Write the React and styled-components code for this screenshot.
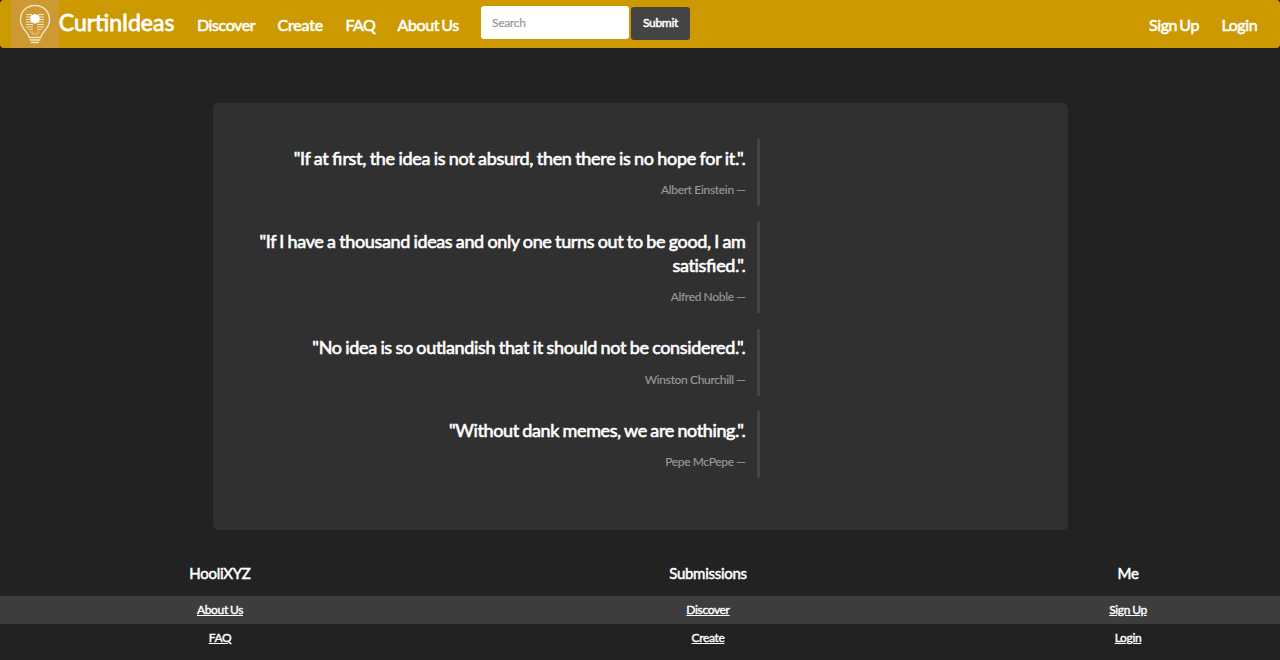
import React from 'react';
import styled, { createGlobalStyle } from 'styled-components';

const GlobalStyle = createGlobalStyle`
  * { box-sizing: border-box; }
  body {
    margin: 0;
    background: #222;
    color: #fff;
    font-family: Lato, "Liberation Sans", sans-serif;
    font-size: 12px;
    line-height: 17px;
    overflow: hidden;
  }
`;

const Navbar = styled.nav`
  display: flex;
  height: 48px;
  padding: 0 11px;
  background: #c90;
  border-radius: 4px;
`;

const Brand = styled.a`
  display: flex;
  width: 175px;
  font-size: 23px;
  line-height: 45px;
  white-space: nowrap;
  -webkit-text-stroke: 0.8px #fff;
`;

const Logo = styled.svg`
  flex: none;
  width: 48px;
  height: 48px;
  margin-right: -0.3px;
`;

const NavLink = styled.a`
  width: ${(p) => p.$width}px;
  padding-left: 11px;
  font-size: 16px;
  line-height: 49px;
  letter-spacing: ${(p) => p.$tracking ?? -0.4}px;
  word-spacing: -1.5px;
  white-space: nowrap;
  -webkit-text-stroke: 0.6px #fff;
`;

const SearchForm = styled.form`
  display: flex;
  gap: 2px;
  padding: 6px 0 0 11px;
  margin-right: auto;
`;

const SearchInput = styled.input`
  width: 148px;
  height: 33px;
  padding: 0 11px 1px;
  border: 0;
  border-radius: 3px;
  background: #fff;
  font: 12px Lato, sans-serif;
  letter-spacing: -0.3px;
  &::placeholder { color: #999; opacity: 1; -webkit-text-stroke: 0.2px #999; }
`;

const SubmitButton = styled.button`
  width: 59px;
  height: 33px;
  margin-top: 1px;
  padding: 0 0 2px;
  border: 0;
  border-radius: 3px;
  background: #444;
  color: #fff;
  font: 12px Lato, sans-serif;
  letter-spacing: -0.3px;
  -webkit-text-stroke: 0.5px #fff;
`;

const Panel = styled.main`
  width: 855px;
  height: 427px;
  margin: 55px 0 0 213px;
  padding: 36px 45px;
  border-radius: 5px;
  background: #303030;
`;

const Quote = styled.blockquote`
  width: 502px;
  margin: 0 0 ${(p) => p.$gap}px;
  padding: ${(p) => p.$top}px 11.5px 8px 0;
  border-right: 3px solid #444;
  text-align: right;
`;

const QuoteText = styled.p`
  margin: 0 0 ${(p) => p.$below}px;
  font-size: 18px;
  line-height: 24px;
  letter-spacing: ${(p) => p.$tracking}px;
  word-spacing: -0.7px;
  -webkit-text-stroke: 0.6px #fff;
`;

const Ligature = styled.span`
  letter-spacing: 0;
`;

const Author = styled.small`
  display: block;
  font-size: 12px;
  line-height: 17px;
  letter-spacing: -0.3px;
  word-spacing: -0.3px;
  color: #999;
  -webkit-text-stroke: 0.15px #999;
`;

const Footer = styled.footer`
  margin-top: 22px;
`;

const FooterRow = styled.div`
  display: grid;
  grid-template-columns: 440px 536px 304px;
  align-items: center;
  height: 28px;
  padding-bottom: 2px;
  text-align: center;
  background: ${(p) => (p.$striped ? '#3d3d3d' : 'transparent')};
`;

const FooterHeadings = styled(FooterRow)`
  height: 44px;
`;

const FooterTitle = styled.h3`
  margin: 0;
  font-size: 15px;
  font-weight: 400;
  line-height: 20px;
  letter-spacing: -0.28px;
  -webkit-text-stroke: 0.5px #fff;
`;

const FooterLink = styled.a`
  text-decoration: underline;
  letter-spacing: -0.35px;
  word-spacing: -0.6px;
  -webkit-text-stroke: 0.4px #fff;
`;

const quotes = [
  { text: '"If at first, the idea is not absurd, then there is no hope for it.".', by: 'Albert Einstein', gap: 16, top: 7, below: 11, tracking: -0.3 },
  { text: '"If I have a thousand ideas and only one turns out to be good, I am satisfied.".', by: 'Alfred Noble', gap: 16, top: 7, below: 11, tracking: -0.36 },
  { text: '"No idea is so outlandish that it should not be considered.".', by: 'Winston Churchill', gap: 15, top: 6, below: 12, tracking: -0.33 },
  { text: '"Without dank memes, we are nothing.".', by: 'Pepe McPepe', gap: 0, top: 7, below: 11, tracking: -0.37 },
];

const navLinks = [['Discover', 80.5], ['Create', 68, -0.2], ['FAQ', 52, -0.6], ['About Us', 83.5]];

// Tracked text drops its ligatures, so each "fi" pair keeps normal spacing.
const keepLigature = (word) =>
  word.split(/(fi)/).map((part, i) => (part === 'fi' ? <Ligature key={i}>fi</Ligature> : part));

const withLigatures = (text) =>
  text.split(/(\S*fi\S*)/).map((part, i) => (part.includes('fi') ? <span key={i}>{keepLigature(part)}</span> : part));

function BulbLogo() {
  return (
    <Logo viewBox="0 0 48 48">
      <rect width="48" height="48" fill="#cc9933" />
      <g fill="none" stroke="#f3e3c0">
        <path strokeWidth="1.4" d="M18 37 C17 31 9.5 29 9.5 20 C9.5 11 16 5.5 24 5.5 C32 5.5 38.5 11 38.5 20 C38.5 29 31 31 30 37" />
        <path strokeWidth="1.2" d="M15 14.5h6M27 14.5h6M15 17h5M28 17h5M15 19.5h5M28 19.5h5M15 22h6M27 22h6M15 24.5h7M26 24.5h7M15 27h7M26 27h7" />
        <path strokeWidth="1" opacity=".7" d="M17 29.5h5M26 29.5h5M19 32h3.5M25.5 32h3.5M21 34h6" />
        <path strokeWidth="1.6" d="M17.5 37.5h13M18.5 40h11M20 42.5h8" />
      </g>
      <path stroke="#cc9933" strokeWidth="1" d="M24 23v9" />
      <path fill="#fff" d="M24 14l3.8 1.3 1.1 3.7-1.1 3-3.8 1.8-3.8-1.8-1.1-3 1.1-3.7z" />
    </Logo>
  );
}

export default function App() {
  return (
    <>
      <GlobalStyle />
      <Navbar>
        <Brand><BulbLogo />CurtinIdeas</Brand>
        {navLinks.map(([label, width, tracking]) => (
          <NavLink key={label} $width={width} $tracking={tracking}>{label}</NavLink>
        ))}
        <SearchForm>
          <SearchInput placeholder="Search" />
          <SubmitButton type="button">Submit</SubmitButton>
        </SearchForm>
        <NavLink $width={72.5}>Sign Up</NavLink>
        <NavLink $width={58.5}>Login</NavLink>
      </Navbar>
      <Panel>
        {quotes.map((q) => (
          <Quote key={q.by} $gap={q.gap} $top={q.top}>
            <QuoteText $tracking={q.tracking} $below={q.below}>{withLigatures(q.text)}</QuoteText>
            <Author>{q.by} —</Author>
          </Quote>
        ))}
      </Panel>
      <Footer>
        <FooterHeadings>
          <FooterTitle>HooliXYZ</FooterTitle>
          <FooterTitle>Submissions</FooterTitle>
          <FooterTitle>Me</FooterTitle>
        </FooterHeadings>
        <FooterRow $striped>
          <span><FooterLink>About Us</FooterLink></span>
          <span><FooterLink>Discover</FooterLink></span>
          <span><FooterLink>Sign Up</FooterLink></span>
        </FooterRow>
        <FooterRow>
          <span><FooterLink>FAQ</FooterLink></span>
          <span><FooterLink>Create</FooterLink></span>
          <span><FooterLink>Login</FooterLink></span>
        </FooterRow>
      </Footer>
    </>
  );
}
